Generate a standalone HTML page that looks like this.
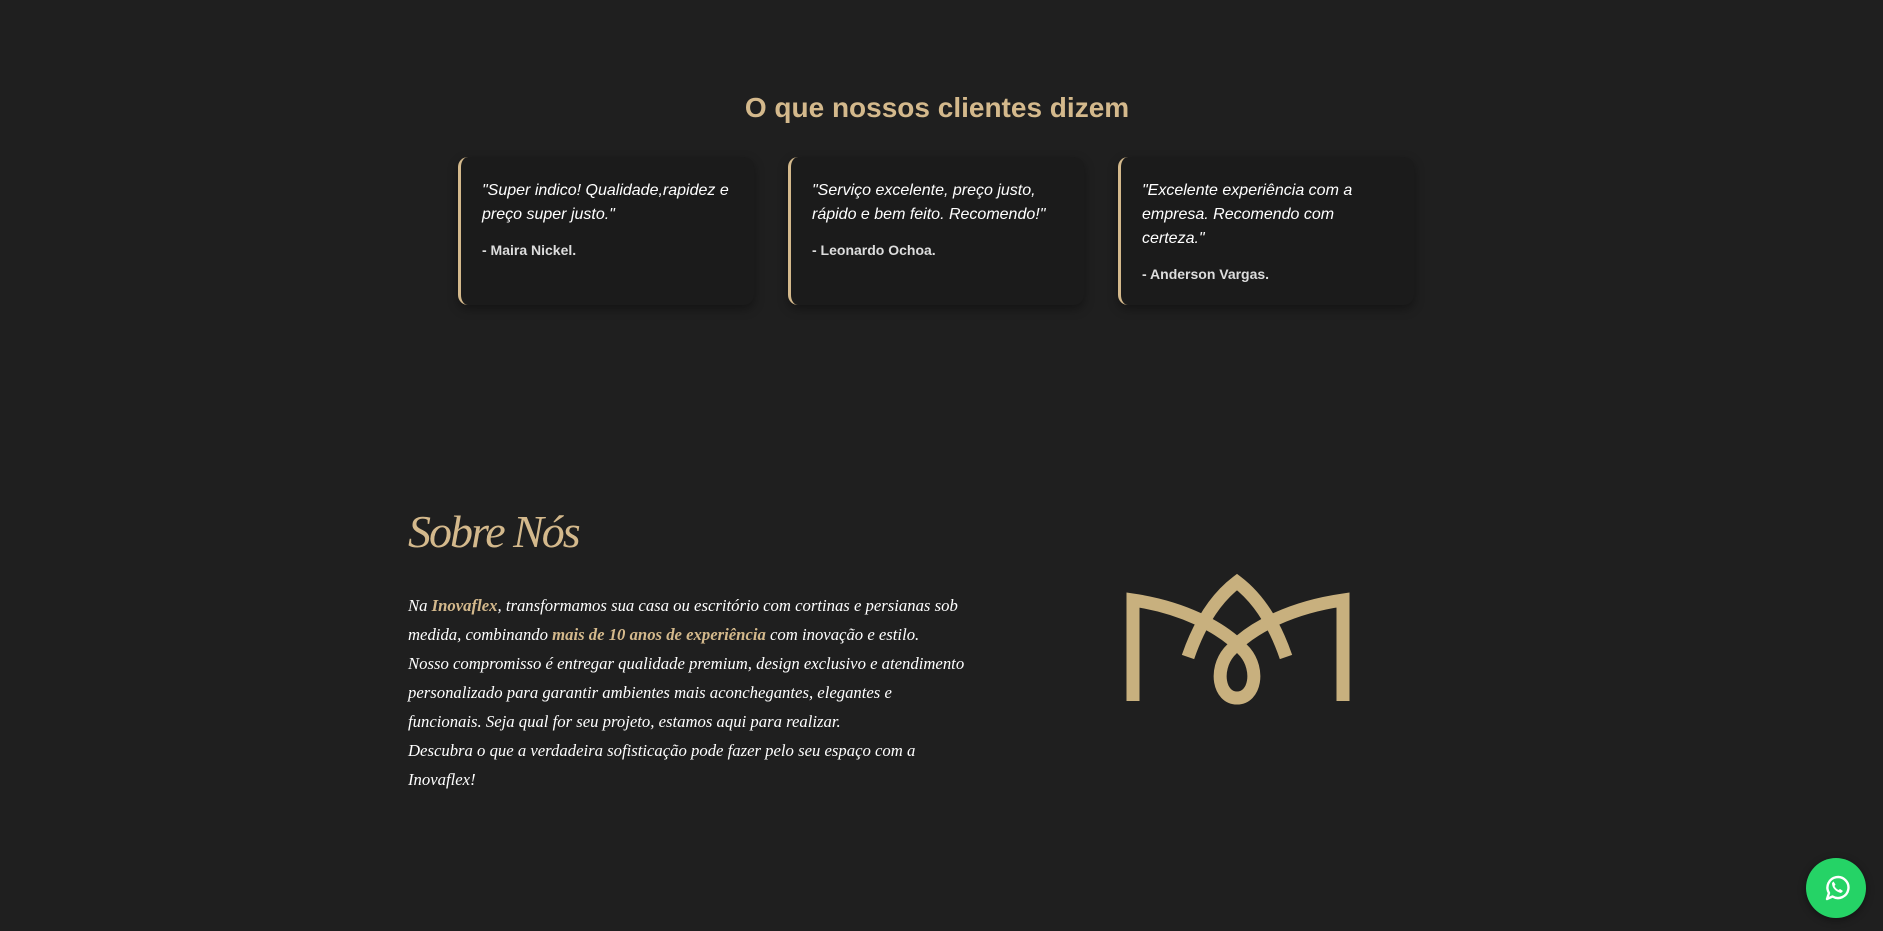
<!DOCTYPE html>
<html><head><meta charset="utf-8"><style>
body{margin:0;width:1883px;height:931px;background:#1f1f1f;overflow:hidden;position:relative;font-family:"Liberation Sans",sans-serif}
h2{position:absolute;top:92px;left:0;width:1874px;text-align:center;margin:0;font-size:28px;font-weight:bold;color:#d4b98c}
.card{position:absolute;top:157px;width:296px;height:148px;background:#1b1b1b;border-left:3px solid #d4b98c;border-radius:10px;box-shadow:0 4px 10px rgba(0,0,0,.35);box-sizing:border-box;padding:22px 18px 0 21px}
.card p{margin:0;font-style:italic;font-size:16px;line-height:24px;color:#fff}
.card .a{margin-top:15px;font-weight:bold;font-size:14px;color:#ddd}
.sob{position:absolute;left:408px;top:505px;font-family:"Liberation Serif",serif;font-style:italic;font-size:46px;color:#d4b98c;letter-spacing:-2px}
.txt{position:absolute;left:408px;top:591px;width:558px;font-family:"Liberation Serif",serif;font-style:italic;font-size:16.7px;line-height:29px;color:#fff}
.txt b{color:#d4b98c}
</style></head><body>
<h2>O que nossos clientes dizem</h2>
<div class="card" style="left:458px"><p>"Super indico! Qualidade,rapidez e preço super justo."</p><div class="a">- Maira Nickel.</div></div>
<div class="card" style="left:788px"><p>"Serviço excelente, preço justo, rápido e bem feito. Recomendo!"</p><div class="a">- Leonardo Ochoa.</div></div>
<div class="card" style="left:1118px"><p>"Excelente experiência com a empresa. Recomendo com certeza."</p><div class="a">- Anderson Vargas.</div></div>
<div class="sob">Sobre Nós</div>
<div class="txt">Na <b>Inovaflex</b>, transformamos sua casa ou escritório com cortinas e persianas sob medida, combinando <b>mais de 10 anos de experiência</b> com inovação e estilo.<br>Nosso compromisso é entregar qualidade premium, design exclusivo e atendimento personalizado para garantir ambientes mais aconchegantes, elegantes e funcionais. Seja qual for seu projeto, estamos aqui para realizar.<br>Descubra o que a verdadeira sofisticação pode fazer pelo seu espaço com a Inovaflex!</div>
<svg style="position:absolute;left:1100px;top:560px" width="260" height="160" viewBox="0 0 260 160">
<g fill="none" stroke="#c8b07e" stroke-width="13">
<path d="M33,141 V40 C80,47 122,66 145,92 C160,110 155,138 137,138 C119,138 114,110 129,92 C152,66 194,47 243,40 V141"/>
<path d="M88,97 C100,62 116,38 137,22 C158,38 174,62 186,97"/>
</g></svg>
<div style="position:absolute;left:1806px;top:858px;width:60px;height:60px;border-radius:50%;background:#25d366;box-shadow:0 2px 8px rgba(0,0,0,.4)">
<svg width="60" height="60" viewBox="0 0 60 60"><path d="M21,41 L23,35 A10.5,10.5 0 1 1 26.5,38.5 Z" fill="none" stroke="#fff" stroke-width="2.4" stroke-linejoin="round"/><path d="M26,25 c0,5 4,9 9,10 l2,-2 l-3,-2 l-1.5,1 c-2,-1 -3,-2 -4,-4 l1,-1.5 l-2,-3 Z" fill="#fff"/></svg></div>
</body></html>
